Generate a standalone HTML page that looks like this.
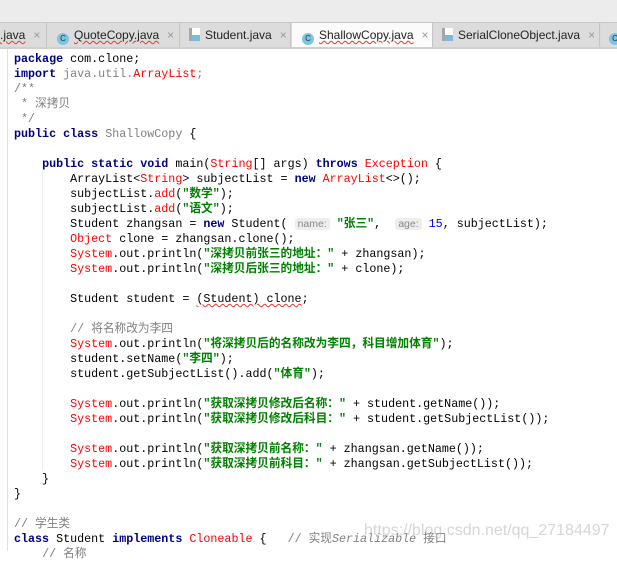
<!DOCTYPE html>
<html><head><meta charset="utf-8"><style>
body{margin:0;width:617px;height:551px;overflow:hidden;background:#fff;position:relative;font-family:"Liberation Sans","Noto Sans CJK SC",sans-serif}
#top{position:absolute;left:0;top:0;width:617px;height:22px;background:#ececec}
#tabs{position:absolute;left:0;top:22px;width:617px;height:24px;background:#d9d9d9;border-top:1px solid #c8c8c8;border-bottom:2px solid #d0d0d0}
.tab{position:absolute;top:0;height:24px;background:#dcdcdc;border-right:1px solid #c4c4c4;font-size:12px;line-height:24px;color:#222;white-space:nowrap}
.tab.a{background:#fbfbfb}
.ic{display:inline-block;width:12px;height:12px;border-radius:50%;background:#7fc4e0;vertical-align:-2px;margin-right:5px;font-size:8px;line-height:12px;text-align:center;color:#234}
.jf{display:inline-block;width:11px;height:13px;background:linear-gradient(#fff 0 55%,#7fb8d8 55%);border-left:3px solid #9fa8b0;vertical-align:-2px;margin-right:5px;box-sizing:border-box}
.x{color:#999;margin-left:8px}
.sq{text-decoration:underline wavy #e33;text-decoration-thickness:1px}
#gut{position:absolute;left:7px;top:49px;width:1px;height:502px;background:#e0e0e0}
#ig{position:absolute;left:42px;top:170px;width:1px;height:300px;background:#eee}
pre{position:absolute;left:14px;top:52px;margin:0;font-family:"Liberation Mono","Noto Sans CJK SC",monospace;font-size:11.7px;line-height:15px;color:#000}
.k{color:#000080;font-weight:bold}.r{color:#f00}.s{color:#008000;font-weight:bold}.c{color:#808080}.g{color:#808080}.n{color:#00f}
.h{font-family:"Liberation Sans",sans-serif;font-size:10.5px;color:#888;background:#eee;border-radius:3px;padding:0 3px}
.wm{position:absolute;left:364px;top:522px;font-size:16px;color:rgba(180,180,180,.55);font-family:"Liberation Sans",sans-serif}
</style></head><body>
<div id="top"></div>
<div id="tabs">
<div class="tab" style="left:0;width:46px"><span class="sq">.java</span><span class="x">×</span></div>
<div class="tab" style="left:47px;width:133px;padding-left:10px;box-sizing:border-box"><span class="ic">C</span><span class="sq">QuoteCopy.java</span><span class="x">×</span></div>
<div class="tab" style="left:181px;width:110px;padding-left:8px;box-sizing:border-box"><span class="jf"></span>Student.java<span class="x">×</span></div>
<div class="tab a" style="left:292px;width:141px;padding-left:10px;box-sizing:border-box"><span class="ic">C</span><span class="sq">ShallowCopy.java</span><span class="x">×</span></div>
<div class="tab" style="left:434px;width:166px;padding-left:8px;box-sizing:border-box"><span class="jf"></span>SerialCloneObject.java<span class="x">×</span></div>
<div class="tab" style="left:601px;width:20px;padding-left:8px;box-sizing:border-box"><span class="ic">C</span></div>
</div>
<div id="gut"></div><div id="ig"></div>
<pre><span class="k">package</span> com.clone;
<span class="k">import</span> <span class="g">java.util.</span><span class="r">ArrayList</span><span class="g">;</span>
<span class="c">/**
 * 深拷贝
 */</span>
<span class="k">public class</span> <span class="g">ShallowCopy</span> {

    <span class="k">public static void</span> main(<span class="r">String</span>[] args) <span class="k">throws</span> <span class="r">Exception</span> {
        ArrayList&lt;<span class="r">String</span>&gt; subjectList = <span class="k">new</span> <span class="r">ArrayList</span>&lt;&gt;();
        subjectList.<span class="r">add</span>(<span class="s">"数学"</span>);
        subjectList.<span class="r">add</span>(<span class="s">"语文"</span>);
        Student zhangsan = <span class="k">new</span> Student( <span class="h">name:</span> <span class="s">"张三"</span>,  <span class="h">age:</span> <span class="n">15</span>, subjectList);
        <span class="r">Object</span> clone = zhangsan.clone();
        <span class="r">System</span>.out.println(<span class="s">"深拷贝前张三的地址："</span> + zhangsan);
        <span class="r">System</span>.out.println(<span class="s">"深拷贝后张三的地址："</span> + clone);

        Student student = <span class="sq">(Student) clone</span>;

        <span class="c">// 将名称改为李四</span>
        <span class="r">System</span>.out.println(<span class="s">"将深拷贝后的名称改为李四，科目增加体育"</span>);
        student.setName(<span class="s">"李四"</span>);
        student.getSubjectList().add(<span class="s">"体育"</span>);

        <span class="r">System</span>.out.println(<span class="s">"获取深拷贝修改后名称："</span> + student.getName());
        <span class="r">System</span>.out.println(<span class="s">"获取深拷贝修改后科目："</span> + student.getSubjectList());

        <span class="r">System</span>.out.println(<span class="s">"获取深拷贝前名称："</span> + zhangsan.getName());
        <span class="r">System</span>.out.println(<span class="s">"获取深拷贝前科目："</span> + zhangsan.getSubjectList());
    }
}

<span class="c">// 学生类</span>
<span class="k">class</span> Student <span class="k">implements</span> <span class="r">Cloneable</span> {   <span class="c">// 实现<i>Serializable</i> 接口</span>
    <span class="c">// 名称</span></pre>
<div class="wm">https://blog.csdn.net/qq_27184497</div>
</body></html>
